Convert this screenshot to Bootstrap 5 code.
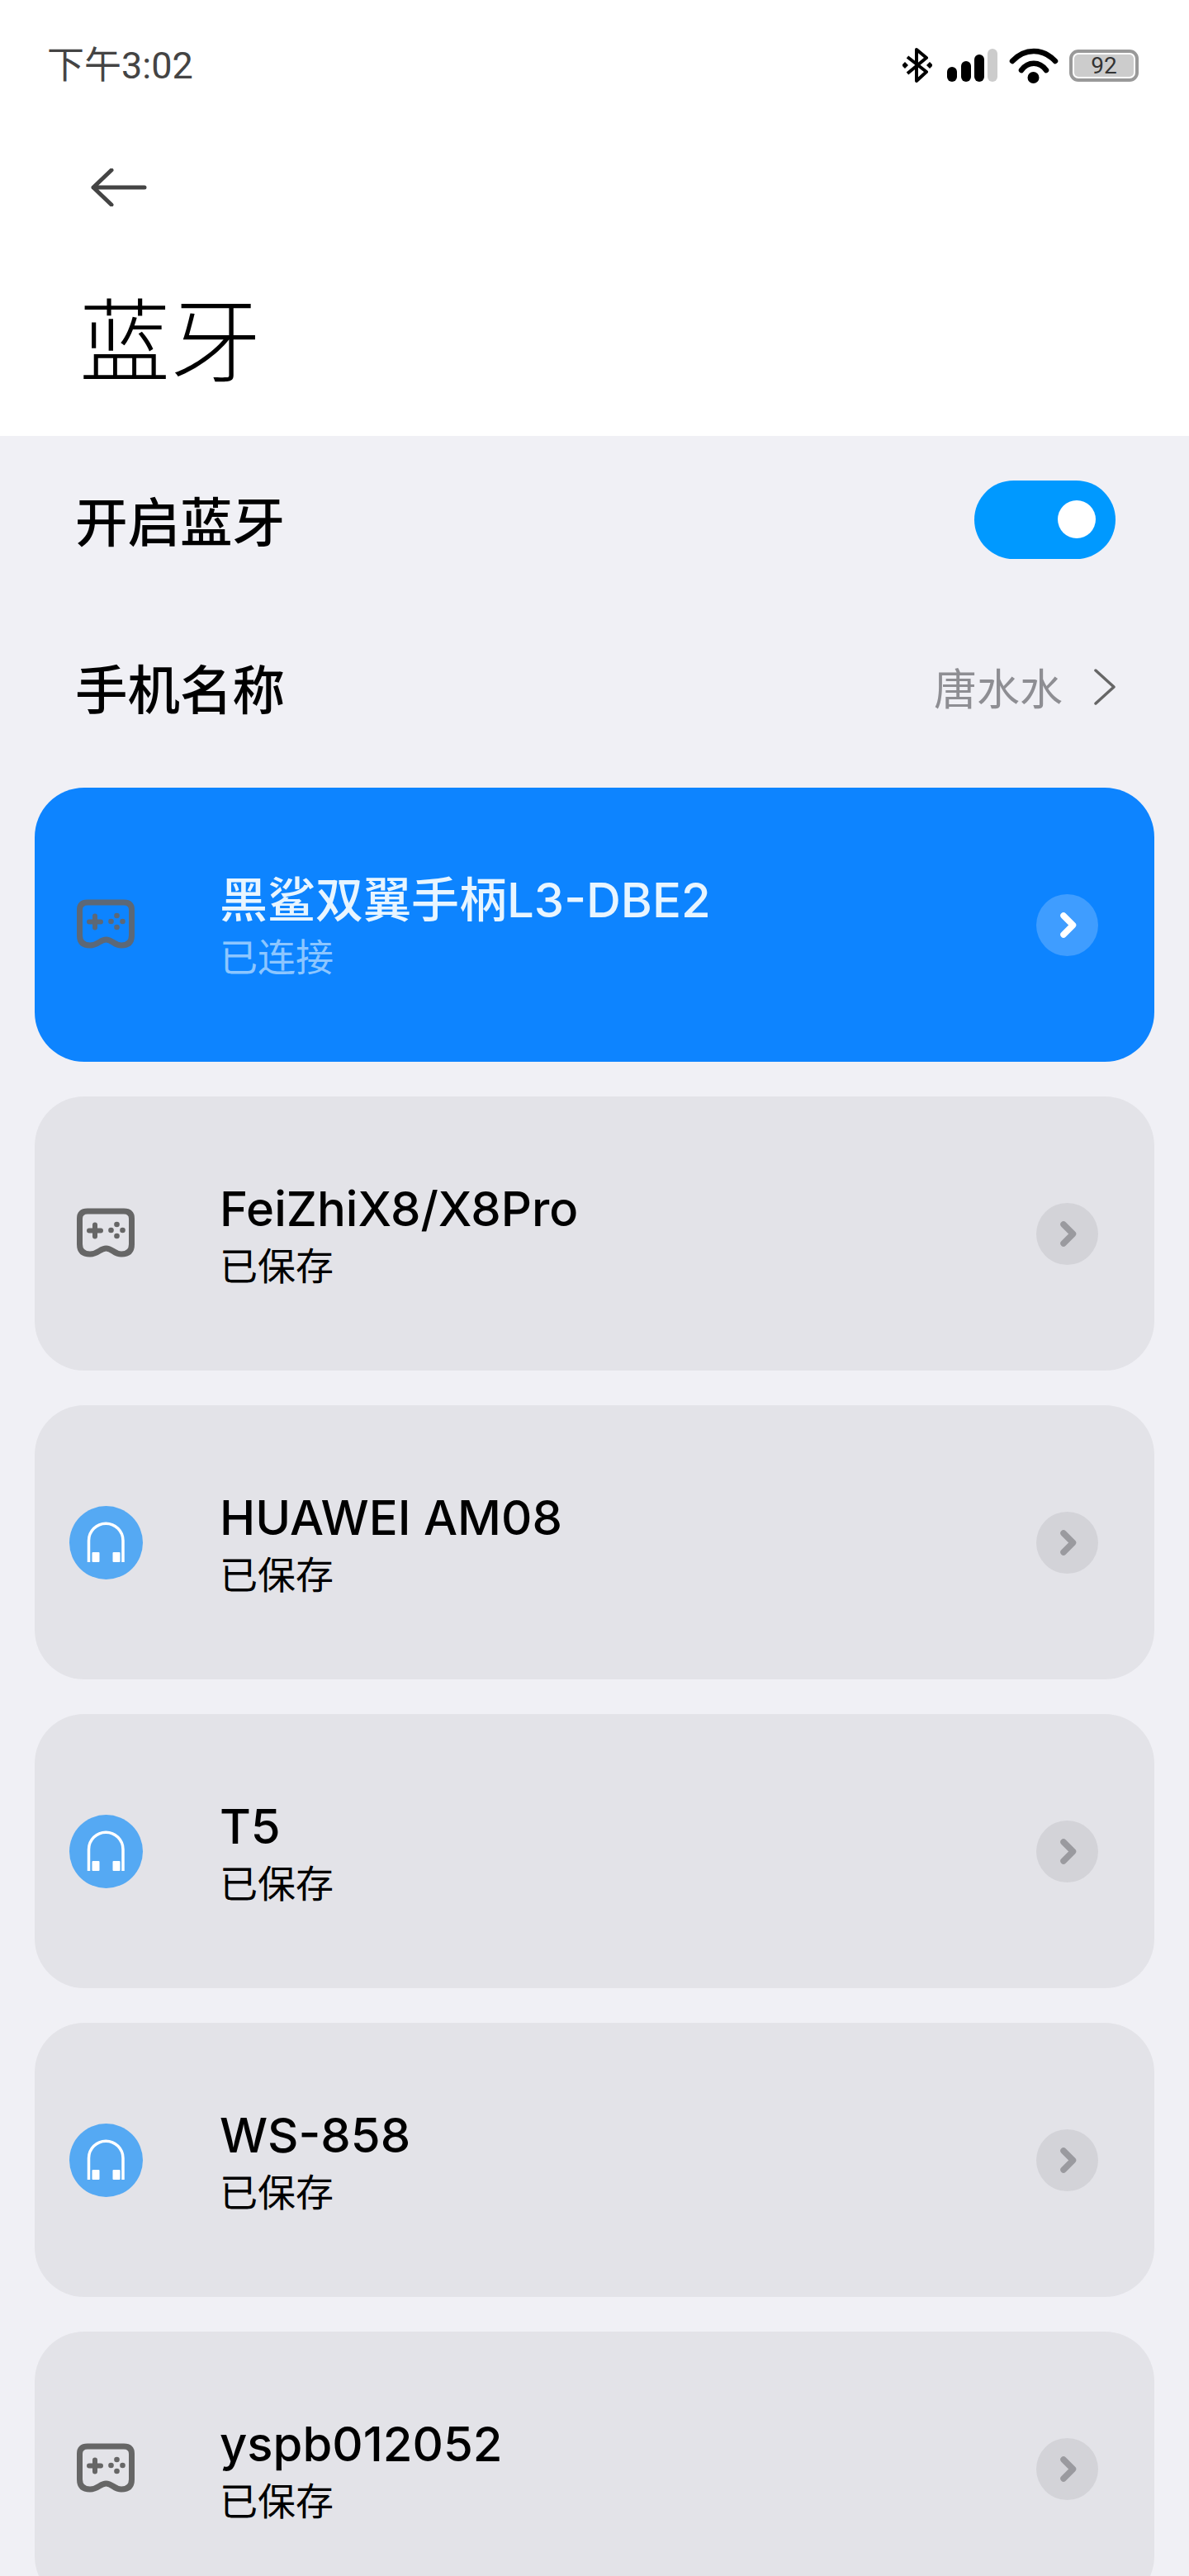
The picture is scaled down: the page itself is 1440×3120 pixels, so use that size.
<!DOCTYPE html>
<html lang="zh-CN">
<head>
  <meta charset="UTF-8">
  <title>蓝牙</title>
  <link rel="stylesheet" href="https://cdn.jsdelivr.net/npm/bootstrap@5.3.0/dist/css/bootstrap.min.css">
  <style>
    html, body { height: 3120px; overflow: hidden; }
    body { background: #f0f0f5; font-family: "Inter", "Noto Sans CJK SC", sans-serif; color: #000; }
    .top-head { background: #fff; height: 528px; }
    .status-row { height: 158px; padding: 0 61px 0 57px; }
    .status-time { font-family: "Roboto", "Noto Sans CJK SC", sans-serif; font-size: 45px; color: #444; line-height: 1; }
    .batt { width: 84px; height: 39px; border: 4px solid #999; border-radius: 11px; padding: 2px; }
    .batt-fill { background: #ccc; border-radius: 5px; height: 100%; font: 28px/27px "Roboto", sans-serif; color: #333; text-align: center; }
    .ic-bt { margin-right: 18px; }
    .ic-wifi { margin: 0 13px 0 14px; }
    .back-row { padding-left: 110px; height: 46px; margin-top: 46px; }
    .page-title { font-family: "Noto Sans CJK SC", sans-serif; font-weight: 300; font-size: 110px; line-height: 1; margin: 0; padding: 101px 0 0 96px; }
    .set-row { padding: 0 89px 0 91px; font-size: 63.500px; font-weight: 500; font-family: "Noto Sans CJK SC", sans-serif; line-height: 1; }
    .set-row-a { height: 202px; }
    .set-row-b { height: 204px; margin-bottom: 20px; }
    .switch-pill { width: 171px; height: 95px; border-radius: 48px; background: #0099ff; padding-right: 24px; }
    .switch-knob { width: 46px; height: 46px; border-radius: 50%; background: #fff; }
    .set-value { font-size: 52px; font-weight: 400; color: #8e8e93; margin-right: 38px; }
    .dev-list { padding: 0 42px; gap: 42px; }
    .dev-card { height: 332px; flex: none; border-radius: 60px; background: #e3e3e8; padding: 0 68px 0 42px; }
    .dev-card.on { background: #0d84ff; }
    .dev-ico { width: 89px; height: 89px; flex: none; margin-right: 93px; }
    .dev-ico.round { background: #55a9f3; border-radius: 50%; }
    .dev-name { font-size: 58px; font-weight: 500; line-height: 72px; font-family: "Inter", "Noto Sans CJK SC", sans-serif; }
    .dev-sub { font-size: 46px; line-height: 60px; font-family: "Noto Sans CJK SC", sans-serif; }
    .on .dev-name { color: #e8f5ff; }
    .on .dev-sub { color: #8cc6ff; }
    .dev-go { width: 75px; height: 75px; border-radius: 50%; background: #d3d3d8; flex: none; }
    .on .dev-go { background: #3f9dff; }
  </style>
</head>
<body>
  <svg width="0" height="0" class="d-block">
    <symbol id="pad" viewBox="0 0 89 89">
      <path d="M22 17H66Q75.500 17 75.500 26V57Q75.500 69 63 69C54 69 52 62 44.500 62C37 62 35 69 25 69Q12.500 69 12.500 57V26Q12.500 17 22 17Z" fill="none" stroke="currentColor" stroke-width="7"/>
      <path d="M24 40.500H38M31 33.500V47.500" fill="none" stroke="currentColor" stroke-width="6" stroke-linecap="round"/>
      <circle cx="57.500" cy="33" r="3.300" fill="currentColor"/><circle cx="57.500" cy="47" r="3.300" fill="currentColor"/>
      <circle cx="50.500" cy="40" r="3.300" fill="currentColor"/><circle cx="64.500" cy="40" r="3.300" fill="currentColor"/>
    </symbol>
    <symbol id="phones" viewBox="0 0 89 89">
      <path d="M23.500 68V42A20.750 20.750 0 0 1 65 42V68" fill="none" stroke="#fff" stroke-width="3.500"/>
      <rect x="27.500" y="56" width="9" height="12" rx="1" fill="#fff"/><rect x="52.500" y="56" width="9" height="12" rx="1" fill="#fff"/>
    </symbol>
    <symbol id="go" viewBox="0 0 75 75">
      <path d="M33 26L44.500 37.500L33 49" fill="none" stroke="currentColor" stroke-width="7.500" stroke-linecap="round" stroke-linejoin="round"/>
    </symbol>
  </svg>

  <div class="top-head">
    <div class="status-row d-flex align-items-center justify-content-between">
      <span class="status-time">下午3:02</span>
      <div class="d-flex align-items-center">
        <svg width="36" height="42" viewBox="0 0 36 42" class="ic-bt"><path d="M6 11L29 29L17 40V2L29 12L6 31" fill="none" stroke="#000" stroke-width="4" stroke-linejoin="round"/><path d="M3 17L7 21L3 25L-1 21ZM33 17L37 21L33 25L29 21Z"/></svg>
        <svg width="61" height="40" viewBox="0 0 61 40"><rect x="0" y="22" width="12" height="18" rx="6"/><rect x="17" y="15" width="12" height="25" rx="6"/><rect x="33" y="7" width="12" height="33" rx="6"/><rect x="49" y="0" width="12" height="40" rx="6" fill="#ccc"/></svg>
        <svg width="60" height="43" viewBox="0 0 60 43" class="ic-wifi"><path d="M4 16C19 0 41 0 56 16M15 27C23 16 37 16 45 27" fill="none" stroke="#000" stroke-width="6.500" stroke-linecap="round"/><circle cx="29.500" cy="36" r="7"/></svg>
        <div class="batt"><div class="batt-fill">92</div></div>
      </div>
    </div>
    <div class="back-row">
      <svg width="68" height="46" viewBox="0 0 68 46" class="d-block"><path d="M25 2L3 23L25 44M3 23H65" fill="none" stroke="#444" stroke-width="5" stroke-linecap="round" stroke-linejoin="round"/></svg>
    </div>
    <h1 class="page-title">蓝牙</h1>
  </div>

  <div class="set-row set-row-a d-flex align-items-center justify-content-between">
    <span>开启蓝牙</span>
    <div class="switch-pill d-flex align-items-center justify-content-end"><div class="switch-knob"></div></div>
  </div>
  <div class="set-row set-row-b d-flex align-items-center justify-content-between">
    <span>手机名称</span>
    <div class="d-flex align-items-center">
      <span class="set-value">唐水水</span>
      <svg width="26" height="46" viewBox="0 0 26 46"><path d="M2 3L24 23L2 43" fill="none" stroke="#666" stroke-width="3.500" stroke-linecap="round" stroke-linejoin="round"/></svg>
    </div>
  </div>

  <div id="devList" class="dev-list d-flex flex-column"></div>

  <script>
    const devices = [
      { name: '黑鲨双翼手柄L3-DBE2', sub: '已连接', icon: 'pad', on: true },
      { name: 'FeiZhiX8/X8Pro', sub: '已保存', icon: 'pad' },
      { name: 'HUAWEI AM08', sub: '已保存', icon: 'phones' },
      { name: 'T5', sub: '已保存', icon: 'phones' },
      { name: 'WS-858', sub: '已保存', icon: 'phones' },
      { name: 'yspb012052', sub: '已保存', icon: 'pad' }
    ];

    document.getElementById('devList').innerHTML = devices.map(d => `
      <div class="dev-card d-flex align-items-center ${d.on ? 'on' : ''}">
        <div class="dev-ico ${d.icon === 'phones' ? 'round' : ''}" style="color: ${d.on ? '#5c6877' : '#666'}">
          <svg width="89" height="89" class="d-block"><use href="#${d.icon}"/></svg>
        </div>
        <div class="flex-grow-1">
          <div class="dev-name">${d.name}</div>
          <div class="dev-sub">${d.sub}</div>
        </div>
        <div class="dev-go" style="color: ${d.on ? '#fff' : '#9a9a9f'}">
          <svg width="75" height="75" class="d-block"><use href="#go"/></svg>
        </div>
      </div>`).join('');
  </script>
  <script src="https://cdn.jsdelivr.net/npm/bootstrap@5.3.0/dist/js/bootstrap.bundle.min.js"></script>
</body>
</html>
